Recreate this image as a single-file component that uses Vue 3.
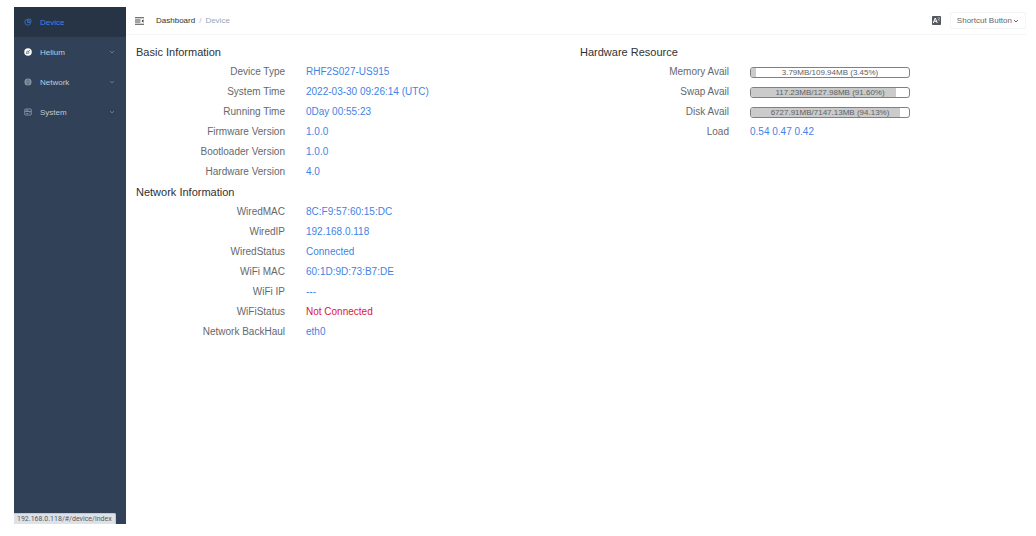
<script setup>
const basic = [
  { label: 'Device Type', value: 'RHF2S027-US915' },
  { label: 'System Time', value: '2022-03-30 09:26:14 (UTC)' },
  { label: 'Running Time', value: '0Day 00:55:23' },
  { label: 'Firmware Version', value: '1.0.0' },
  { label: 'Bootloader Version', value: '1.0.0' },
  { label: 'Hardware Version', value: '4.0' },
]
const network = [
  { label: 'WiredMAC', value: '8C:F9:57:60:15:DC' },
  { label: 'WiredIP', value: '192.168.0.118' },
  { label: 'WiredStatus', value: 'Connected' },
  { label: 'WiFi MAC', value: '60:1D:9D:73:B7:DE' },
  { label: 'WiFi IP', value: '---' },
  { label: 'WiFiStatus', value: 'Not Connected', bad: true },
  { label: 'Network BackHaul', value: 'eth0' },
]
const resources = [
  { label: 'Memory Avail', text: '3.79MB/109.94MB (3.45%)', percent: 3.45 },
  { label: 'Swap Avail', text: '117.23MB/127.98MB (91.60%)', percent: 91.6 },
  { label: 'Disk Avail', text: '6727.91MB/7147.13MB (94.13%)', percent: 94.13 },
]
</script>

<template>
  <div class="app">
    <aside class="sidebar">
      <nav class="menu">
        <a class="item active" href="#/device/index">
          <svg class="icon" viewBox="0 0 16 16" fill="none" stroke="currentColor" stroke-width="1.6">
            <path d="M7 2.2A6 6 0 1 0 13.5 9H7z" />
            <path d="M9.5 1.5v5h5a5 5 0 0 0-5-5z" />
          </svg>
          <span class="name">Device</span>
        </a>
        <button class="item" type="button">
          <svg class="icon bright" viewBox="0 0 16 16">
            <circle cx="8" cy="8" r="7.5" fill="currentColor" />
            <circle cx="7.6" cy="8.4" r="2.4" fill="none" stroke="#304156" stroke-width="1.3" />
            <path d="M9.5 6.5l2.4-2.4M4 12l1.8-1.8" stroke="#304156" stroke-width="1.3" />
          </svg>
          <span class="name">Helium</span>
          <svg class="arrow" viewBox="0 0 8 8"><path d="M2 3l2 2 2-2" /></svg>
        </button>
        <button class="item" type="button">
          <svg class="icon" viewBox="0 0 16 16">
            <circle cx="8" cy="8" r="7" fill="currentColor" opacity="0.8" />
            <path d="M1 8h14M8 1v14M3 4.5q5 2 10 0M3 11.5q5-2 10 0M8 1q-6 7 0 14q6-7 0-14" fill="none" stroke="#304156" stroke-width="0.5" />
          </svg>
          <span class="name">Network</span>
          <svg class="arrow" viewBox="0 0 8 8"><path d="M2 3l2 2 2-2" /></svg>
        </button>
        <button class="item" type="button">
          <svg class="icon" viewBox="0 0 16 16" fill="none" stroke="currentColor" stroke-width="1.3">
            <rect x="1.5" y="2" width="13" height="12" rx="1" />
            <path d="M2 7h12M4.5 11h4M10.500 10h2M4 4.500h5" />
          </svg>
          <span class="name">System</span>
          <svg class="arrow" viewBox="0 0 8 8"><path d="M2 3l2 2 2-2" /></svg>
        </button>
      </nav>
      <div class="link-status">192.168.0.118/#/device/index</div>
    </aside>

    <div class="main">
      <header class="topbar">
        <button class="fold" type="button" aria-label="Collapse menu">
          <svg viewBox="0 0 18 16" fill="none" stroke="#303133" stroke-width="1.8">
            <path d="M0 1.5h18M0 6h11M0 10h11M0 14.5h18" />
            <path d="M17 4.5v7L13 8z" fill="#303133" stroke="none" />
          </svg>
        </button>
        <nav class="crumbs" aria-label="Breadcrumb">
          <a href="#/">Dashboard</a>
          <span class="slash">/</span>
          <span class="here">Device</span>
        </nav>
        <button class="lang" type="button" aria-label="Language">
          <svg viewBox="0 0 18 18">
            <rect width="18" height="18" rx="1.5" fill="#55585f" />
            <path d="M2.5 14L6.5 4l4 10M4 10.5h5" fill="none" stroke="#fff" stroke-width="2" />
            <path d="M11 4h5M13.5 2.5v1.5M15.5 4q-1 4-4.5 5.5M11.5 5q1.5 3 4.5 4.5" fill="none" stroke="#d8dade" stroke-width="0.9" />
          </svg>
        </button>
        <button class="shortcut" type="button">
          Shortcut Button
          <svg class="caret" viewBox="0 0 8 8"><path d="M2 3l2 2 2-2" /></svg>
        </button>
      </header>

      <main class="content">
        <div class="column">
          <section>
            <h2>Basic Information</h2>
            <dl>
              <div v-for="row in basic" :key="row.label" class="row">
                <dt>{{ row.label }}</dt>
                <dd>{{ row.value }}</dd>
              </div>
            </dl>
          </section>
          <section>
            <h2>Network Information</h2>
            <dl>
              <div v-for="row in network" :key="row.label" class="row">
                <dt>{{ row.label }}</dt>
                <dd :class="{ bad: row.bad }">{{ row.value }}</dd>
              </div>
            </dl>
          </section>
        </div>
        <div class="column">
          <section>
            <h2>Hardware Resource</h2>
            <dl>
              <div v-for="row in resources" :key="row.label" class="row">
                <dt>{{ row.label }}</dt>
                <dd>
                  <div class="bar" role="progressbar" :aria-label="row.label" :aria-valuenow="row.percent">
                    <div class="fill" :style="{ width: row.percent + '%' }"></div>
                    <span class="amount">{{ row.text }}</span>
                  </div>
                </dd>
              </div>
              <div class="row">
                <dt>Load</dt>
                <dd>0.54 0.47 0.42</dd>
              </div>
            </dl>
          </section>
        </div>
      </main>
    </div>
  </div>
</template>

<style>
body {
  margin: 0;
  background: #fff;
}
</style>

<style scoped>
.app {
  display: flex;
  box-sizing: border-box;
  min-height: 100vh;
  padding: 7px 10px 12px 14px;
  font-family: "Liberation Sans", Arial, sans-serif;
  font-size: 10px;
  color: #66686c;
}
button {
  margin: 0;
  padding: 0;
  border: 0;
  background: none;
  color: inherit;
  font: inherit;
  cursor: pointer;
}
a {
  color: inherit;
  text-decoration: none;
}
svg {
  display: block;
  flex: none;
}
.sidebar {
  position: relative;
  flex: none;
  width: 112px;
  background: #304158;
}
.menu {
  display: flex;
  flex-direction: column;
}
.item {
  display: flex;
  align-items: center;
  gap: 8px;
  height: 30px;
  padding: 0 10px;
  font-size: 8px;
  text-align: left;
  color: #bfcbd9;
}
.item.active {
  background: #263445;
  color: #3f83e6;
}
.icon {
  width: 8px;
  height: 8px;
  opacity: 0.85;
}
.icon.bright {
  color: #fff;
  opacity: 1;
}
.name {
  flex: 1;
}
.arrow,
.caret {
  width: 8px;
  height: 8px;
  fill: none;
  stroke: currentColor;
}
.arrow {
  opacity: 0.4;
}
.link-status {
  position: absolute;
  left: 0;
  bottom: 0;
  padding: 0 3px;
  border-top: 1px solid #c3c8cf;
  border-right: 1px solid #c3c8cf;
  border-top-right-radius: 2px;
  background: #dee1e6;
  font-family: Roboto, "Noto Sans", sans-serif;
  font-size: 7px;
  line-height: 10px;
  white-space: nowrap;
  color: #55595f;
}
.main {
  flex: 1;
  min-width: 0;
}
.topbar {
  display: flex;
  align-items: center;
  height: 27px;
  padding: 0 0 0 9px;
  border-bottom: 1px solid #f3f4f6;
  font-size: 8px;
}
.fold svg {
  width: 9px;
  height: 8px;
}
.crumbs {
  display: flex;
  flex: 1;
  gap: 4px;
  padding-left: 12px;
  color: #303133;
}
.slash {
  color: #b4b8c0;
}
.here {
  color: #97a8be;
}
.lang svg {
  width: 9px;
  height: 9px;
}
.shortcut {
  display: flex;
  align-items: center;
  height: 17px;
  margin-left: 9px;
  padding: 0 5px 0 6px;
  border: 1px solid #f3f4f6;
  border-radius: 2px;
}
.content {
  display: grid;
  grid-template-columns: 1fr 1fr;
  padding: 7px 2px 0 10px;
}
h2 {
  margin: 0;
  font-size: 11px;
  font-weight: 400;
  line-height: 20px;
  color: #303133;
}
dl {
  margin: 0;
}
.row {
  display: grid;
  grid-template-columns: 149px 1fr;
  column-gap: 21px;
  line-height: 20px;
}
dt {
  text-align: right;
}
dd {
  display: flex;
  align-items: center;
  margin: 0;
  color: #3f83e6;
}
.bad {
  color: #dc143c;
}
.bar {
  position: relative;
  box-sizing: border-box;
  width: 160px;
  height: 11px;
  overflow: hidden;
  border: 1px solid #7d8187;
  border-radius: 3px;
}
.fill {
  height: 100%;
  background: #cbcbcb;
}
.amount {
  position: absolute;
  inset: 0;
  font-size: 8px;
  line-height: 9px;
  text-align: center;
  color: #606266;
}
</style>
